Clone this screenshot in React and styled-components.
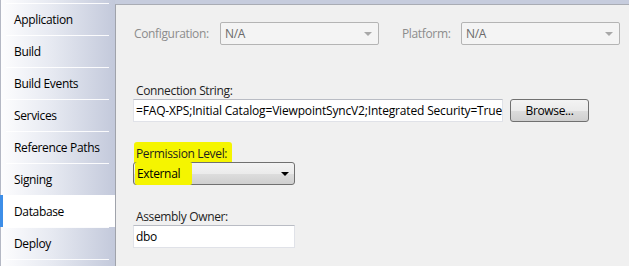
import React from 'react';
import styled, { createGlobalStyle } from 'styled-components';

const GlobalStyle = createGlobalStyle`
  html, body {
    margin: 0;
    padding: 0;
    background: #c6ccdd;
  }
  body {
    font-family: 'Open Sans', 'Noto Sans', sans-serif;
    font-size: 12px;
    letter-spacing: -0.35px;
    color: #1e1e1e;
  }
`;

const Frame = styled.div`
  display: flex;
  width: 629px;
  height: 266px;
  overflow: hidden;
  background: #c6ccdd;
`;

const Sidebar = styled.div`
  width: 115px;
  flex-shrink: 0;
  padding-top: 3px;
  box-sizing: border-box;
  background: linear-gradient(to right, #fdfdfe 0%, #e6e9f1 45%, #c3c9db 100%);
  border-left: 1px solid #b4b8c4;
`;

const Tab = styled.div`
  position: relative;
  height: 32px;
  display: flex;
  align-items: center;
  background: ${(p) => (p.$active ? '#ffffff' : 'transparent')};
  margin-left: ${(p) => (p.$active ? '-1px' : '0')};
  border-left: ${(p) => (p.$active ? '3px solid #3d8ee8' : '0')};
  padding-left: ${(p) => (p.$active ? '11px' : '13px')};
  color: #000;
  &::before {
    content: '';
    position: absolute;
    top: 0;
    left: 5px;
    right: 6px;
    height: 1px;
    background: rgba(255, 255, 255, 0.9);
  }
`;

const TabEnd = styled.div`
  height: 1px;
  margin: 0 6px 0 5px;
  background: rgba(255, 255, 255, 0.9);
`;

const Content = styled.div`
  flex: 1;
  margin-top: 4px;
  background: #f0f0f0;
  border-top: 1px solid #a9acb4;
  border-left: 1px solid #a0a3ab;
  padding: 17px 0 0 17px;
`;

const Row = styled.div`
  display: flex;
  align-items: center;
`;

const DimLabel = styled.span`
  color: #8c8c8c;
  width: ${(p) => p.$w}px;
  padding-left: 1px;
`;

const DisabledSelect = styled.div`
  position: relative;
  box-sizing: border-box;
  width: 159px;
  height: 23px;
  border: 1px solid #b4b4b4;
  border-radius: 2px;
  background: #f4f4f4;
  color: #6a6a6a;
  padding-left: 4px;
  display: flex;
  align-items: center;
  margin-right: 22px;
  &::after {
    content: '';
    position: absolute;
    right: 6px;
    top: 9px;
    border-left: 4px solid transparent;
    border-right: 4px solid transparent;
    border-top: 4px solid #a8a8a8;
  }
`;

const Field = styled.div`
  margin-top: ${(p) => p.$top}px;
`;

const Label = styled.div`
  padding-left: 3px;
  height: 17px;
  line-height: 17px;
`;

const Marked = styled.span`
  background: #f5f500;
  padding: 3px 5px 3px 2px;
  margin-left: -2px;
  border-radius: 3px;
`;

const TextBox = styled.div`
  box-sizing: border-box;
  width: ${(p) => p.$w}px;
  height: 23px;
  background: #fff;
  border: 1px solid #e0e2e8;
  border-top-color: #b9bcc4;
  display: flex;
  align-items: center;
  padding: 0 3px 0 2px;
  white-space: nowrap;
  overflow: hidden;
  letter-spacing: ${(p) => (p.$wide ? '-0.17px' : '-0.35px')};
  color: #000;
`;

const Button = styled.div`
  box-sizing: border-box;
  width: 79px;
  height: 23px;
  margin-left: 7px;
  border: 1px solid #707070;
  border-radius: 3px;
  background: linear-gradient(#f3f3f3 0%, #ebebeb 50%, #dddddd 51%, #cfcfcf 100%);
  display: flex;
  align-items: center;
  justify-content: center;
  color: #000;
`;

const Combo = styled.div`
  position: relative;
  box-sizing: border-box;
  width: 162px;
  height: 23px;
  border: 1px solid #707070;
  border-radius: 3px;
  background: linear-gradient(#f3f3f3 0%, #ebebeb 50%, #dddddd 51%, #cfcfcf 100%);
  display: flex;
  align-items: center;
  padding-left: 3px;
  color: #000;
  &::after {
    content: '';
    position: absolute;
    right: 5px;
    top: 9px;
    border-left: 4px solid transparent;
    border-right: 4px solid transparent;
    border-top: 4px solid #000;
  }
`;

const ComboText = styled.span`
  background: #f5f500;
  padding: 3px 12px 3px 2px;
  margin-left: -2px;
  border-radius: 2px;
`;

const tabs = [
  'Application',
  'Build',
  'Build Events',
  'Services',
  'Reference Paths',
  'Signing',
  'Database',
  'Deploy',
];

export default function App() {
  return (
    <Frame>
      <GlobalStyle />
      <Sidebar>
        {tabs.map((t) => (
          <Tab key={t} $active={t === 'Database'}>
            {t}
          </Tab>
        ))}
        <TabEnd />
      </Sidebar>
      <Content>
        <Row>
          <DimLabel $w={86}>Configuration:</DimLabel>
          <DisabledSelect>N/A</DisabledSelect>
          <DimLabel $w={59}>Platform:</DimLabel>
          <DisabledSelect>N/A</DisabledSelect>
        </Row>

        <Field $top={37}>
          <Label>Connection String:</Label>
          <Row>
            <TextBox $w={370} $wide>
              =FAQ-XPS;Initial Catalog=ViewpointSyncV2;Integrated Security=True
            </TextBox>
            <Button>Browse...</Button>
          </Row>
        </Field>

        <Field $top={23}>
          <Label>
            <Marked>Permission Level:</Marked>
          </Label>
          <Combo>
            <ComboText>External</ComboText>
          </Combo>
        </Field>

        <Field $top={23}>
          <Label>Assembly Owner:</Label>
          <TextBox $w={162}>dbo</TextBox>
        </Field>
      </Content>
    </Frame>
  );
}
